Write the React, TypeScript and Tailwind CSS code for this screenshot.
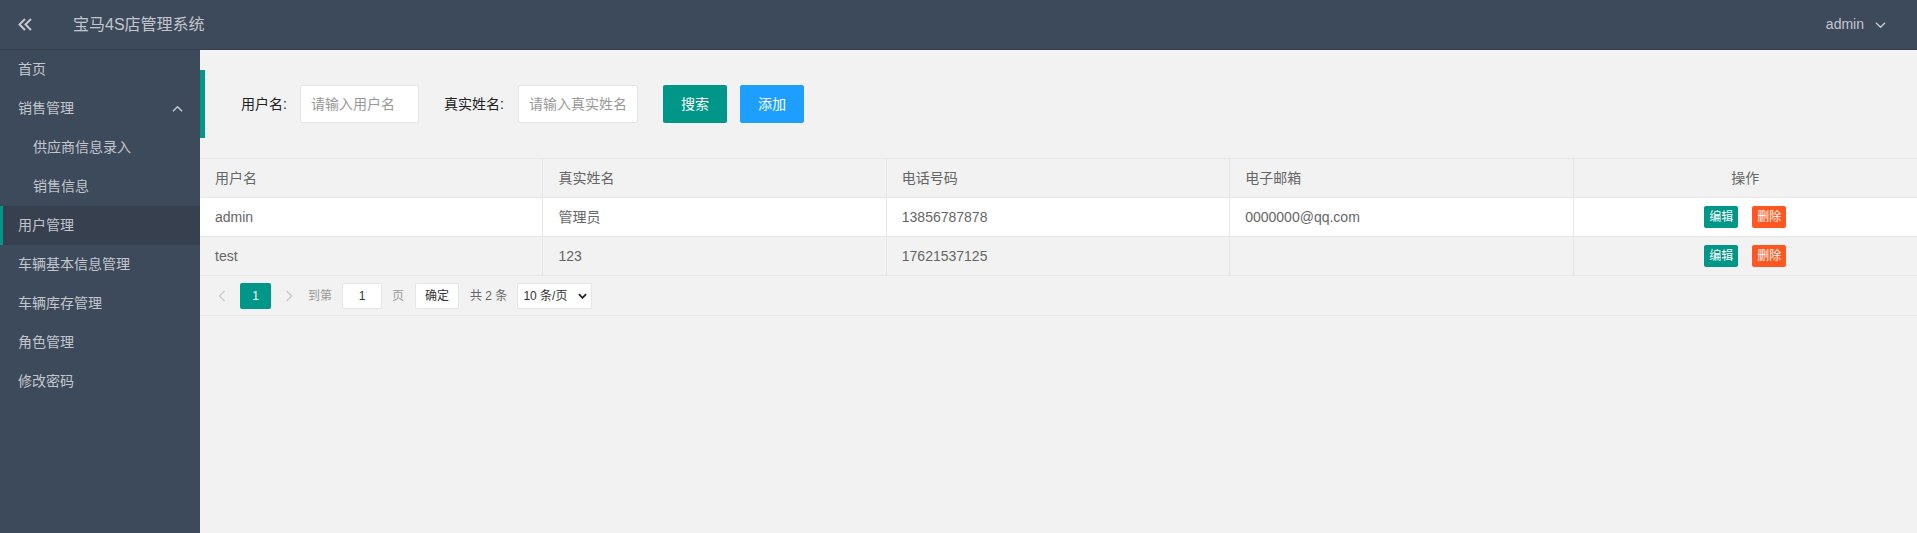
import React from "react";

const font = "font-['Liberation_Sans','Noto_Sans_CJK_SC',sans-serif]";

const menu = [
  { label: "首页" },
  { label: "销售管理", open: true },
  { label: "供应商信息录入", sub: true },
  { label: "销售信息", sub: true },
  { label: "用户管理", active: true },
  { label: "车辆基本信息管理" },
  { label: "车辆库存管理" },
  { label: "角色管理" },
  { label: "修改密码" },
];

const rows = [
  { username: "admin", realName: "管理员", phone: "13856787878", email: "0000000@qq.com", bg: "bg-white" },
  { username: "test", realName: "123", phone: "17621537125", email: "", bg: "bg-[#f2f2f2]" },
];

function Chevron({ dir, className }: { dir: "left" | "right" | "up" | "down"; className?: string }) {
  const pts: Record<string, string> = {
    left: "9,2 3,8 9,14",
    right: "3,2 9,8 3,14",
    up: "2,9 7,4 12,9",
    down: "2,4 7,9 12,4",
  };
  const box = dir === "left" || dir === "right" ? "0 0 12 16" : "0 0 14 12";
  return (
    <svg viewBox={box} className={className} fill="none" stroke="currentColor" strokeWidth="1.5">
      <polyline points={pts[dir]} />
    </svg>
  );
}

function menuClass(m: { sub?: boolean; active?: boolean }) {
  if (m.active) return "bg-[#37404f] border-l-[3px] border-[#009688] pl-[15px]";
  if (m.sub) return "pl-[33px]";
  return "pl-[18px]";
}

export default function App() {
  return (
    <div className={`w-full h-[533px] flex flex-col overflow-hidden ${font}`}>
      {/* Header */}
      <header className="h-[50px] shrink-0 bg-[#3d4a5c] border-b border-[#353f4e] flex items-center text-white/70">
        <svg viewBox="0 0 14 13" className="w-[14px] h-[13px] ml-[18px]" fill="none" stroke="currentColor" strokeWidth="2">
          <polyline points="7,1 1.5,6.5 7,12" />
          <polyline points="13,1 7.5,6.5 13,12" />
        </svg>
        <span className="ml-[41px] text-[16px]">宝马4S店管理系统</span>
        <div className="ml-auto mr-[30px] flex items-center gap-[10px] text-[14px]">
          <span>admin</span>
          <Chevron dir="down" className="w-[13px] h-[11px]" />
        </div>
      </header>

      <div className="flex flex-1 min-h-0">
        {/* Sidebar */}
        <aside className="w-[200px] shrink-0 bg-[#3d4a5c] text-[14px] text-white/70">
          {menu.map((m) => (
            <div key={m.label} className={`h-[39px] flex items-center ${menuClass(m)}`}>
              <span>{m.label}</span>
              {m.open && <Chevron dir="up" className="ml-auto mr-[16px] w-[13px] h-[11px]" />}
            </div>
          ))}
        </aside>

        {/* Main */}
        <main className="flex-1 bg-[#f2f2f2] min-w-0">
          <div className="mt-[20px] mb-[20px] border-l-[5px] border-[#009688] py-[15px] pl-[36px] flex items-center text-[14px] text-[#222]">
            <span className="w-[59px]">用户名:</span>
            <div className="w-[119px] h-[38px] bg-white border border-[#e6e6e6] rounded-[2px] flex items-center pl-[10px] text-[#999]">
              请输入用户名
            </div>
            <span className="ml-[25px] w-[74px]">真实姓名:</span>
            <div className="w-[120px] h-[38px] bg-white border border-[#e6e6e6] rounded-[2px] flex items-center pl-[10px] text-[#999] overflow-hidden whitespace-nowrap">
              请输入真实姓名
            </div>
            <button className="ml-[25px] w-[64px] h-[38px] bg-[#009688] text-white rounded-[2px]">搜索</button>
            <button className="ml-[13px] w-[64px] h-[38px] bg-[#1e9fff] text-white rounded-[2px]">添加</button>
          </div>

          {/* Table */}
          <div className="border-t border-b border-[#e6e6e6] text-[14px] text-[#666]">
            <div className="grid grid-cols-5 h-[39px] border-b border-[#e6e6e6] bg-[#f2f2f2]">
              {["用户名", "真实姓名", "电话号码", "电子邮箱"].map((h) => (
                <div key={h} className="px-[15px] flex items-center border-r border-[#e6e6e6]">
                  {h}
                </div>
              ))}
              <div className="flex items-center justify-center">操作</div>
            </div>
            {rows.map((r) => (
              <div key={r.username} className={`grid grid-cols-5 h-[39px] border-b border-[#e6e6e6] ${r.bg}`}>
                {[r.username, r.realName, r.phone, r.email].map((c, i) => (
                  <div key={i} className="px-[15px] flex items-center border-r border-[#e6e6e6]">
                    {c}
                  </div>
                ))}
                <div className="flex items-center justify-center gap-[14px] text-[12px] text-white">
                  <span className="w-[34px] h-[22px] rounded-[2px] bg-[#009688] flex items-center justify-center">编辑</span>
                  <span className="w-[34px] h-[22px] rounded-[2px] bg-[#ff5722] flex items-center justify-center">删除</span>
                </div>
              </div>
            ))}

            {/* Pagination */}
            <div className="h-[39px] flex items-center text-[12px] pl-[10px]">
              <div className="w-[24px] flex justify-center text-[#c8c8c8]">
                <Chevron dir="left" className="w-[10px] h-[16px]" />
              </div>
              <div className="ml-[6px] w-[31px] h-[26px] rounded-[2px] bg-[#009688] text-white flex items-center justify-center">
                1
              </div>
              <div className="ml-[6px] w-[24px] flex justify-center text-[#c8c8c8]">
                <Chevron dir="right" className="w-[10px] h-[16px]" />
              </div>
              <span className="ml-[7px] text-[#999]">到第</span>
              <div className="ml-[10px] w-[40px] h-[26px] bg-white border border-[#e6e6e6] rounded-[2px] flex items-center justify-center text-[#333]">
                1
              </div>
              <span className="ml-[10px] text-[#999]">页</span>
              <div className="ml-[11px] w-[44px] h-[26px] bg-white border border-[#e6e6e6] rounded-[2px] flex items-center justify-center text-[#333]">
                确定
              </div>
              <span className="ml-[11px] text-[#666]">共 2 条</span>
              <div className="ml-[10px] w-[75px] h-[26px] bg-white border border-[#e6e6e6] rounded-[2px] flex items-center pl-[5px] text-[#333]">
                <span>10 条/页</span>
                <svg viewBox="0 0 10 6" className="ml-auto mr-[4px] w-[9px] h-[6px]" fill="none" stroke="#222" strokeWidth="2">
                  <polyline points="1,1 5,5 9,1" />
                </svg>
              </div>
            </div>
          </div>
        </main>
      </div>
    </div>
  );
}
